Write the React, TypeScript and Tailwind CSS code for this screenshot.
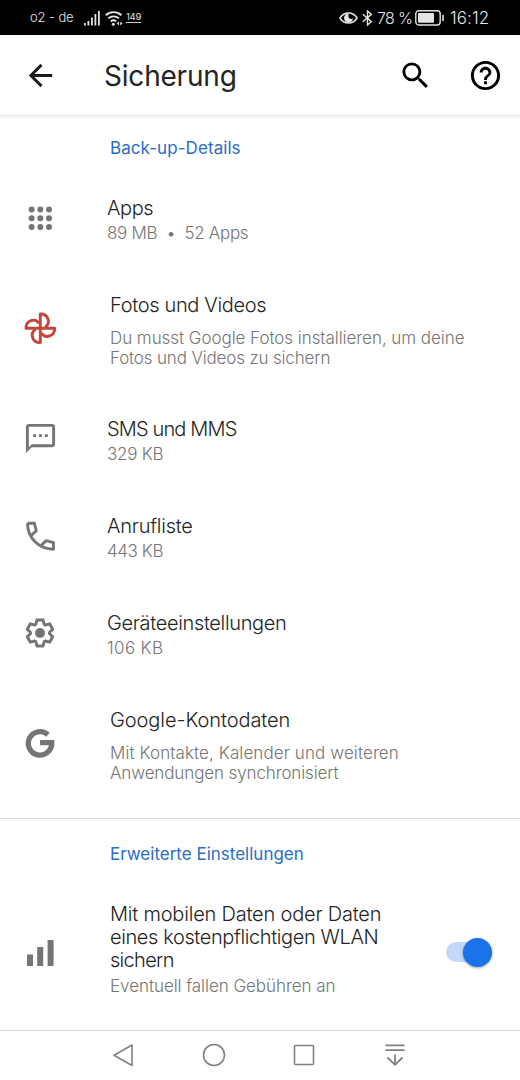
import { useState } from 'react';
import type { ReactNode } from 'react';
import { MdArrowBack, MdHelpOutline, MdOutlineTextsms, MdSearch } from 'react-icons/md';

type BackupItem = {
  id: string;
  title: string;
  details: string[];
  icon: ReactNode;
  titleClass: string;
  detailClass: string[];
  tall?: boolean;
};

function AppsIcon() {
  return (
    <svg className="size-9" viewBox="0 0 36 36" fill="currentColor">
      {[9.6, 18.3, 27].map((y) =>
        [9.6, 18.3, 27].map((x) => <circle key={`${x}-${y}`} cx={x} cy={y} r="3" />)
      )}
    </svg>
  );
}

function PhotosIcon() {
  return (
    <svg className="size-9 text-[#c5443c]" viewBox="0 0 36 36" fill="none" stroke="currentColor" strokeWidth="2.9" strokeLinejoin="round">
      {[0, 90, 180, 270].map((angle) => (
        <path key={angle} d="M18.3 18.3V4a7.600 7.300 0 0 1 4.900 13.200" transform={`rotate(${angle} 18.3 18.3)`} />
      ))}
    </svg>
  );
}

function PhoneIcon() {
  return (
    <svg className="size-9" viewBox="0 0 36 36" fill="none" stroke="currentColor" strokeWidth="2.9" strokeLinejoin="round">
      <path d="M5.500 5.300h6.900l1.900 7.500-5 4.600M5.500 5.300C5.500 20 17 31.200 31.500 31.200v-6.600l-7.300-2-5 4.800" />
    </svg>
  );
}

function GearIcon() {
  return (
    <svg className="size-9" viewBox="0 0 36 36" fill="none" stroke="currentColor" strokeWidth="3" strokeLinejoin="round">
      <path d="M14.900 5.100H21.100L22.200 9.350L23.400 10.050L27.620 8.870L30.720 14.240L27.600 17.300V18.700L30.720 21.760L27.620 27.130L23.400 25.950L22.200 26.650L21.100 30.900H14.900L13.800 26.650L12.600 25.950L8.380 27.130L5.280 21.760L8.400 18.700V17.300L5.280 14.240L8.380 8.870L12.600 10.050L13.800 9.350Z" />
      <circle cx="18" cy="18" r="5" fill="currentColor" stroke="none" />
    </svg>
  );
}

function GoogleIcon() {
  return (
    <svg className="size-9" viewBox="0 0 36 36" fill="none" stroke="currentColor" strokeWidth="5.300">
      <path d="M26 9.800a11.700 11.700 0 1 0 3.700 7.900H18" />
    </svg>
  );
}

function BarsIcon() {
  return (
    <svg className="size-9" viewBox="0 0 36 36" fill="currentColor">
      <path d="M5 19.500h6V31H5zM15.200 12h6v19h-6zM25.600 5h6v26h-6z" />
    </svg>
  );
}

const items: BackupItem[] = [
  {
    id: 'apps',
    title: 'Apps',
    details: ['89 MB  •  52 Apps'],
    icon: <AppsIcon />,
    titleClass: 'tracking-[-0.4px]',
    detailClass: ['tracking-[-0.3px]'],
  },
  {
    id: 'photos',
    title: 'Fotos und Videos',
    details: ['Du musst Google Fotos installieren, um deine', 'Fotos und Videos zu sichern'],
    icon: <PhotosIcon />,
    titleClass: 'tracking-[-0.33px]',
    detailClass: ['tracking-[-0.05px]', 'tracking-[-0.16px]'],
    tall: true,
  },
  {
    id: 'sms',
    title: 'SMS und MMS',
    details: ['329 KB'],
    icon: <MdOutlineTextsms className="size-[35px]" />,
    titleClass: 'tracking-[-0.85px]',
    detailClass: ['tracking-[-0.25px]'],
  },
  {
    id: 'calls',
    title: 'Anrufliste',
    details: ['443 KB'],
    icon: <PhoneIcon />,
    titleClass: 'tracking-[-0.25px]',
    detailClass: ['tracking-[-0.4px]'],
  },
  {
    id: 'device',
    title: 'Geräteeinstellungen',
    details: ['106 KB'],
    icon: <GearIcon />,
    titleClass: 'tracking-[-0.35px]',
    detailClass: ['tracking-[0.35px]'],
  },
  {
    id: 'google',
    title: 'Google-Kontodaten',
    details: ['Mit Kontakte, Kalender und weiteren', 'Anwendungen synchronisiert'],
    icon: <GoogleIcon />,
    titleClass: 'tracking-[-0.08px]',
    detailClass: ['tracking-[0.1px]', 'tracking-[-0.12px]'],
    tall: true,
  },
];

function StatusBar() {
  return (
    <div className="flex h-[35px] shrink-0 items-center bg-black px-[30px] text-[#e4e4e4]">
      <span className="w-[54px] pt-px text-[13px] tracking-[-0.1px] whitespace-nowrap">o2 - de</span>
      <svg className="h-4 w-[17px]" viewBox="0 0 17 16" fill="currentColor">
        <path d="M0 13h1.800v2.500H0zM3.500 11h1.800v4.500H3.500zM7 7.500h1.800v8H7zM10.500 4h1.800v11.500h-1.800zM14 1h1.800v14.500H14z" />
      </svg>
      <svg className="ml-1 h-4 w-[18px]" viewBox="0 0 18 16" fill="none" stroke="currentColor" strokeWidth="1.9">
        <path d="M.8 5.200a11.500 11.500 0 0 1 15.600 0M3.300 8.400a8 8 0 0 1 10.600 0M5.800 11.400a4.500 4.500 0 0 1 5.400-.2" />
        <circle cx="8.300" cy="14.200" r="1.500" fill="currentColor" stroke="none" />
        <path d="M14 11.500v4l-2.200-2zM15.300 11.500v4l2.200-2z" fill="currentColor" stroke="none" />
      </svg>
      <span className="mb-[2px] ml-[3px] border-b border-[#d0d0d0] text-[9.5px] leading-[11px] font-normal tracking-[-0.3px]">149</span>
      <div className="ml-auto flex items-center">
        <svg className="h-3 w-[19px]" viewBox="0 0 19 12" fill="none" stroke="currentColor" strokeWidth="1.5">
          <path d="M.9 6C3 2.600 6 .9 9.500.9S16 2.600 18.100 6C16 9.400 13 11.100 9.500 11.100S3 9.400.9 6z" />
          <path d="M9.500 1.500a4.500 4.500 0 1 0 4.500 4.500a2.500 2.500 0 0 1-4.500-1.500z" fill="currentColor" stroke="none" />
        </svg>
        <svg className="ml-[4px] h-4 w-[11px]" viewBox="0 0 11 16" fill="none" stroke="currentColor" strokeWidth="1.400">
          <path d="M.8 4.300l8.600 7.300L5.500 15V1l3.900 3.400L.8 11.700" />
        </svg>
        <span className="ml-1 w-[38px] text-[16px] tracking-[-0.7px] whitespace-nowrap">78 %</span>
        <svg className="h-4 w-[29px]" viewBox="0 0 29 16" fill="none" stroke="currentColor" strokeWidth="1.400">
          <rect x=".8" y=".8" width="24.400" height="14.200" rx="3" />
          <path d="M28 5v6" strokeWidth="1.600" />
          <rect x="3" y="3" width="16" height="9.800" rx="1" fill="currentColor" stroke="none" />
        </svg>
        <span className="ml-[6px] w-[40px] pt-[2px] text-[17px] tracking-[0.1px] whitespace-nowrap">16:12</span>
      </div>
    </div>
  );
}

function BackupRow({ item }: { item: BackupItem }) {
  return (
    <div className={`flex ${item.tall ? 'h-[124px]' : 'h-[97px]'}`}>
      <div className={`flex w-20 shrink-0 justify-center text-[#757575] ${item.tall ? 'pt-[41px]' : 'pt-7'}`}>
        {item.icon}
      </div>
      <div className={`pt-6 whitespace-pre ${item.tall ? 'pl-[30px]' : 'pl-[27px]'}`}>
        <h3 className={`text-[20px] leading-6 text-[#242424] ${item.titleClass}`}>{item.title}</h3>
        <div className={item.tall ? 'mt-[11px]' : 'mt-[3px]'}>
          {item.details.map((line, i) => (
            <p key={line} className={`text-[17px] leading-5 text-[#757575] ${item.detailClass[i]}`}>{line}</p>
          ))}
        </div>
      </div>
    </div>
  );
}

function NavBar() {
  return (
    <div className="flex h-[50px] shrink-0 items-center justify-between border-t border-[#d8d8d8] bg-white pr-[111px] pb-px pl-[109px] text-[#808080]">
      <svg className="size-7" viewBox="0 0 28 28" fill="none" stroke="currentColor" strokeWidth="1.600" strokeLinejoin="round">
        <path d="M23 4v20.500L5 14.300z" />
      </svg>
      <svg className="size-7" viewBox="0 0 28 28" fill="none" stroke="currentColor" strokeWidth="1.600">
        <circle cx="14" cy="14" r="10.500" />
      </svg>
      <svg className="size-7" viewBox="0 0 28 28" fill="none" stroke="currentColor" strokeWidth="1.600">
        <rect x="4.500" y="4.500" width="19" height="19" rx="1" />
      </svg>
      <svg className="size-7" viewBox="0 0 28 28" fill="none" stroke="currentColor" strokeWidth="1.800">
        <path d="M4.500 4.300h19M4.500 9.200h19M14 13.500v10.300M6.500 16.500l7.500 7.300 7.500-7.300" />
      </svg>
    </div>
  );
}

export default function App() {
  const [mobileData, setMobileData] = useState(true);

  return (
    <div className="flex h-[1080px] w-[520px] flex-col overflow-hidden bg-white font-['Inter',sans-serif] font-light">
      <StatusBar />
      <header className="flex h-[81px] shrink-0 items-center border-b border-[#e6e6e6] pr-[17px] pl-[23px] shadow-[0_2px_3px_rgba(0,0,0,0.05)]">
        <MdArrowBack className="size-[35px] text-[#1c1c1c]" />
        <h1 className="ml-[46px] pt-px text-[28px] font-normal tracking-[-0.2px] text-[#242424]">Sicherung</h1>
        <div className="ml-auto flex gap-[35px] text-black">
          <MdSearch className="size-[35px]" />
          <MdHelpOutline className="size-[35px]" />
        </div>
      </header>

      <main className="flex-1">
        <h2 className="h-14 pt-[22px] pl-[110px] text-[17px] leading-5 font-normal tracking-[0.07px] text-[#2a6ebf]">Back-up-Details</h2>
        {items.map((item) => (
          <BackupRow key={item.id} item={item} />
        ))}
        <div className="mt-[10px] border-t border-[#dedede]" />
        <h2 className="h-[70px] pt-[25px] pl-[110px] text-[17px] leading-5 font-normal tracking-[0px] text-[#2a6ebf]">
          Erweiterte Einstellungen
        </h2>
        <div className="flex pt-[14px]">
          <div className="flex w-20 shrink-0 justify-center pt-8 text-[#757575]">
            <BarsIcon />
          </div>
          <div className="w-[310px] pl-[30px] whitespace-nowrap">
            <h3 className="text-[20px] leading-[23px] text-[#242424]">
              <span className="block tracking-[-0.2px]">Mit mobilen Daten oder Daten</span>
              <span className="block tracking-[-0.39px]">eines kostenpflichtigen WLAN</span>
              <span className="block tracking-[-0.7px]">sichern</span>
            </h3>
            <p className="mt-1 text-[17px] leading-5 tracking-[-0.05px] text-[#757575]">Eventuell fallen Gebühren an</p>
          </div>
          <button
            role="switch"
            aria-checked={mobileData}
            onClick={() => setMobileData(!mobileData)}
            className={`mt-[39px] ml-[56px] flex h-5 w-[46px] items-center rounded-full ${mobileData ? 'justify-end bg-[#c3d9f9]' : 'bg-gray-300'}`}
          >
            <span className={`size-[29px] shrink-0 rounded-full shadow-[0_1px_3px_rgba(0,0,0,0.35)] ${mobileData ? 'bg-[#1a73e8]' : 'bg-white'}`} />
          </button>
        </div>
      </main>
      <NavBar />
    </div>
  );
}
